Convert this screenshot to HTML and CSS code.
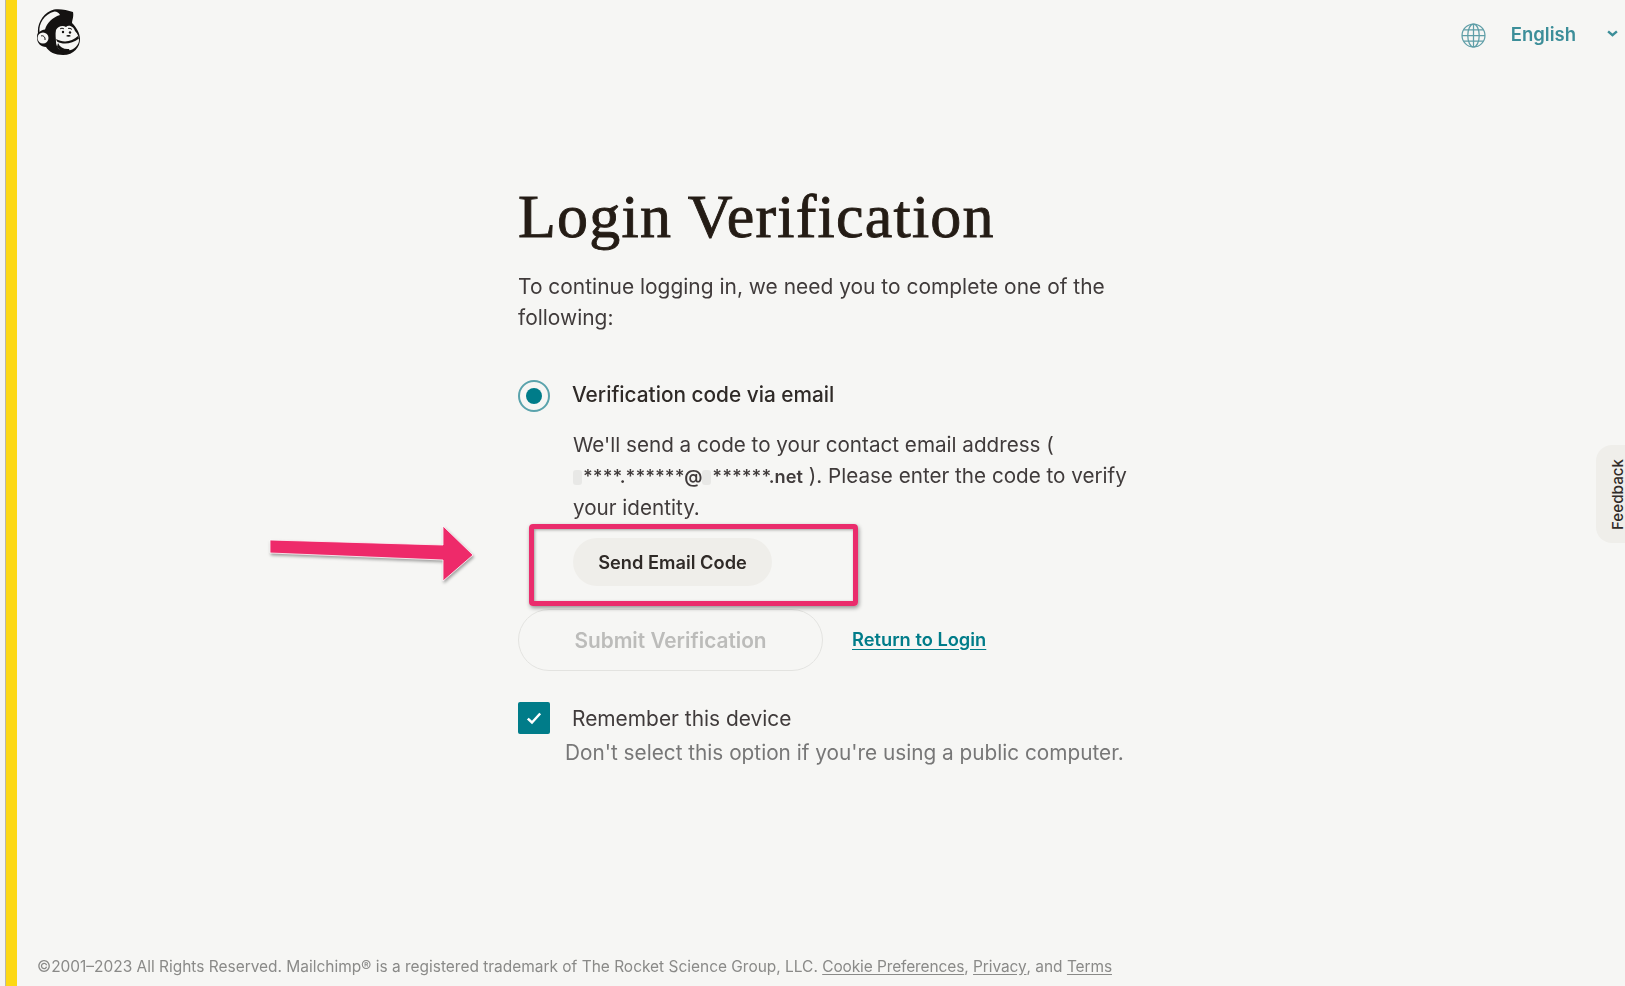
FILE: index.html
```html
<!DOCTYPE html>
<html lang="en">
<head>
<meta charset="utf-8">
<title>Login Verification</title>
<link rel="stylesheet" href="styles.css">
</head>
<body>
<div class="page">
  <div class="edge"></div>
  <div class="stripe"></div>
  <div class="content">
    <header class="topbar">
      <svg class="logo" viewBox="0 0 44 47" aria-label="Mailchimp">
        <path class="ink" d="M2 24C1 14 8 3 18 0.500C24 -0.500 31 1 37 3C38 8 36 11 36 14C40 18 44 24 44 30C44 38 38 46 27 46C19 46 13 43 10 38C5 38 1 34 1 29C1 27 1 25 2 24Z"/>
        <path class="paper" d="M3.500 23C2.500 15 8 5 18.500 2.500C21 2.500 23 4 24 6C16 8.500 11 14 9 20.500C7 20.500 5 21.500 3.500 23Z"/>
        <circle class="paper" cx="7" cy="29" r="5.500"/>
        <path class="ear" d="M5 27C7 26 9.500 28 9 31"/>
        <path class="paper" d="M20 21C22 17 27 16 30 18C33 15 38 18 39 22C42 25 43 28 43 32C42 38 36 42 29 42C24 42 20 38 20 33C20 30 19 25 20 21Z"/>
        <path class="ear" d="M24 20C25 19 27 19 28 20M32 19.500C33 19 35 19.500 36 20.500"/>
        <circle class="ink" cx="27" cy="23" r="1.200"/>
        <circle class="ink" cx="34" cy="23.500" r="1.200"/>
        <path class="ink" d="M30 27C31 25.500 34 25.500 35 27C33.500 28 31.500 28 30 27Z"/>
        <path class="ink" d="M20 30C27 34 36 33 42 27L43 29.500C36 35 27 36 21 32.500Z"/>
        <path class="ink" d="M22 34C24 38.500 28 40.500 33 40L34 42.500L26 43L21 38Z"/>
      </svg>
      <div class="lang">
        <svg class="globe" viewBox="0 0 24 24" aria-hidden="true">
          <circle cx="12" cy="12" r="11"/>
          <ellipse cx="12" cy="12" rx="5.500" ry="11"/>
          <path d="M12 1V23M1 12H23M2.800 6.500H21.200M2.800 17.500H21.200"/>
        </svg>
        <span class="lang-name">English</span>
        <svg class="chev" viewBox="0 0 10 6" aria-hidden="true"><path d="M1 1L5 4.500L9 1"/></svg>
      </div>
    </header>

    <main class="form">
      <h1 class="title">Login Verification</h1>
      <p class="intro">To continue logging in, we need you to complete one of the following:</p>

      <div class="option">
        <span class="radio"><span class="radio-dot"></span></span>
        <span class="option-label">Verification code via email</span>
      </div>
      <p class="desc">We'll send a code to your contact email address ( <span class="nowrap"><b class="addr"><span class="mask"></span>****.******@<span class="mask"></span>******.net</b> ). Please enter the code to verify</span> your identity.</p>
      <div class="send-row"><button class="btn-send" type="button">Send Email Code</button></div>

      <div class="actions">
        <button class="btn-submit" type="button" disabled>Submit Verification</button>
        <a class="return" href="#">Return to Login</a>
      </div>

      <div class="remember">
        <span class="check">
          <svg viewBox="0 0 16 16" aria-hidden="true"><path d="M2.500 8.500L6.200 12L13.500 4"/></svg>
        </span>
        <span class="remember-label">Remember this device</span>
      </div>
      <p class="hint">Don't select this option if you're using a public computer.</p>
    </main>

    <footer class="legal">©2001–2023 All Rights Reserved. Mailchimp® is a registered trademark of The Rocket Science Group, LLC. <a href="#">Cookie Preferences</a>, <a href="#">Privacy</a>, and <a href="#">Terms</a></footer>
  </div>
</div>

<div class="feedback"><span class="feedback-text">Feedback</span></div>
<div class="highlight"></div>
<svg class="arrow" viewBox="0 0 220 60" aria-hidden="true">
  <path d="M10 17L183 22V3L213 32L183 58V37L10 30Z"/>
</svg>
</body>
</html>
```

FILE: styles.css
```css
* { box-sizing: border-box; }
html, body { margin: 0; height: 100%; }
body {
  background: #f6f6f4;
  color: #403b3b;
  font-family: "Inter", "Liberation Sans", sans-serif;
  overflow: hidden;
}
.page { display: flex; height: 986px; }
.edge { width: 6px; background: #f4f4f2; border-right: 1px solid #b9b7a8; }
.stripe { width: 11px; background: #fdd813; }
.content { flex: 1; display: flex; flex-direction: column; min-width: 0; filter: blur(0.35px); }

.topbar {
  height: 70px;
  padding: 9px 7px 0 19px;
  display: flex;
  justify-content: space-between;
  align-items: flex-start;
}
.logo { width: 44px; height: 47px; }
.ink { fill: #141211; }
.paper { fill: #f6f6f4; }
.ear { fill: none; stroke: #141211; stroke-width: 1; }
.lang { display: flex; align-items: center; margin-top: 10px; }
.globe { width: 25px; height: 25px; margin-top: 4px; fill: none; stroke: #5f9ea7; stroke-width: 1.200; }
.lang-name { margin-left: 25px; font-size: 18.500px; font-weight: 600; color: #3c8e99; line-height: 24px; }
.chev { width: 11px; height: 7px; margin-left: 31px; fill: none; stroke: #3c8e99; stroke-width: 2.200; }

.form { width: 606px; margin: 0 auto; padding-top: 111px; }
.title {
  margin: 0;
  font-family: "Liberation Serif", serif;
  font-size: 62px;
  font-weight: 400;
  letter-spacing: 1.200px;
  line-height: 70px;
  color: #241c15;
  -webkit-text-stroke: 0.9px #241c15;
}
.intro { margin: 20px 0 0; font-size: 20.950px; line-height: 31px; }
.option { display: flex; align-items: center; margin-top: 47px; height: 32px; }
.radio {
  width: 32px;
  height: 32px;
  border: 2px solid #5aa3ac;
  border-radius: 50%;
  display: flex;
  align-items: center;
  justify-content: center;
}
.radio-dot { width: 16px; height: 16px; border-radius: 50%; background: #007c89; }
.option-label { margin: 0 0 3px 22px; font-size: 20.800px; font-weight: 550; color: #2f2a27; }
.desc { margin: 17px 0 0; padding-left: 55px; font-size: 20.650px; line-height: 31px; }
.nowrap { white-space: nowrap; }
.addr { font-weight: 600; font-size: 18.200px; }
.mask {
  display: inline-block;
  width: 9px;
  height: 15px;
  margin-right: 1px;
  background: #e8e8e6;
  border-radius: 3px;
  vertical-align: -2px;
}
.send-row { margin: 15px 0 0 55px; }
.btn-send {
  display: block;
  width: 199px;
  height: 48px;
  border: 0;
  border-radius: 24px;
  background: #efeeea;
  color: #2f2a27;
  font: 600 18.250px "Inter", "Liberation Sans", sans-serif;
}
.actions { display: flex; align-items: center; margin-top: 23px; }
.btn-submit {
  width: 305px;
  height: 62px;
  border: 1px solid #e3e3e0;
  border-radius: 31px;
  background: transparent;
  color: #bcbcba;
  font: 600 20.800px "Inter", "Liberation Sans", sans-serif;
}
.return {
  margin: 0 0 3px 29px;
  font-size: 18.300px;
  font-weight: 600;
  color: #007c89;
  text-decoration: underline;
  text-underline-offset: 3px;
}
.remember { display: flex; align-items: center; margin-top: 31px; height: 32px; }
.check {
  width: 32px;
  height: 32px;
  border-radius: 2px;
  background: #007c89;
  display: flex;
  align-items: center;
  justify-content: center;
}
.check svg { width: 18px; height: 18px; fill: none; stroke: #fff; stroke-width: 2.200; }
.remember-label { margin-left: 22px; font-size: 20.900px; }
.hint { margin: 3px 0 0; padding-left: 47px; font-size: 20.770px; line-height: 31px; color: #777; white-space: nowrap; }

.legal { margin-top: auto; padding: 0 0 8px 20px; font-size: 15.460px; line-height: 22px; color: #8a8a88; }
.legal a { color: inherit; letter-spacing: -0.100px; text-underline-offset: 2px; }

.feedback {
  position: absolute;
  right: 0;
  top: 445px;
  width: 29px;
  height: 98px;
  padding-left: 14px;
  background: #efeeea;
  border-radius: 16px 0 0 16px;
  display: flex;
  align-items: center;
  justify-content: center;
}
.feedback-text {
  transform: rotate(-90deg);
  font-size: 15.200px;
  font-weight: 500;
  color: #2f2a27;
  white-space: nowrap;
}
.highlight {
  position: absolute;
  left: 529px;
  top: 524px;
  width: 329px;
  height: 82px;
  border: 5.500px solid #ea2c6c;
  border-radius: 4px;
  box-shadow: 1px 2px 4px rgba(0,0,0,.4), inset 1px 1px 3px rgba(0,0,0,.35);
}
.arrow {
  position: absolute;
  left: 260px;
  top: 523px;
  width: 220px;
  height: 60px;
  filter: drop-shadow(1px 2px 1.500px rgba(0,0,0,.35));
}
.arrow path { fill: #ee2a6a; stroke: #fff; stroke-width: 0.800; }
```
